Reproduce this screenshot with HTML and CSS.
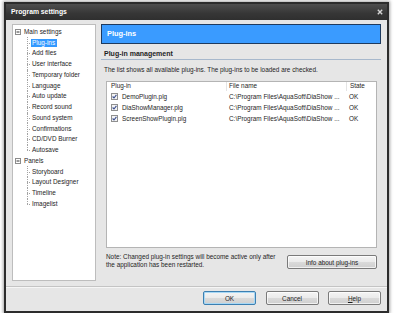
FILE: index.html
```html
<!DOCTYPE html>
<html>
<head>
<meta charset="utf-8">
<title>Program settings</title>
<link rel="stylesheet" href="styles.css">
</head>
<body>
<div class="window">
  <div class="titlebar">
    <span class="title">Program settings</span>
    <svg class="close" width="6" height="6" viewBox="0 0 6 6"><path d="M0.8 0.8 L5.2 5.2 M5.2 0.8 L0.8 5.2" stroke="#d4d4d4" stroke-width="1.4"/></svg>
  </div>
  <div class="content">
    <div class="tree">
      <div class="root">
        <svg class="toggle" width="6" height="6" viewBox="0 0 6 6"><rect x="0.5" y="0.5" width="5" height="5" fill="#fff" stroke="#8c8c8c"/><path d="M1.5 3 H4.5" stroke="#333" stroke-width="1"/></svg>
        <span class="root-label">Main settings</span>
      </div>
      <ul class="children">
        <li class="selected"><span class="label">Plug-ins</span></li>
        <li><span class="label">Add files</span></li>
        <li><span class="label">User interface</span></li>
        <li><span class="label">Temporary folder</span></li>
        <li><span class="label">Language</span></li>
        <li><span class="label">Auto update</span></li>
        <li><span class="label">Record sound</span></li>
        <li><span class="label">Sound system</span></li>
        <li><span class="label">Confirmations</span></li>
        <li><span class="label">CD/DVD Burner</span></li>
        <li><span class="label">Autosave</span></li>
      </ul>
      <div class="root">
        <svg class="toggle" width="6" height="6" viewBox="0 0 6 6"><rect x="0.5" y="0.5" width="5" height="5" fill="#fff" stroke="#8c8c8c"/><path d="M1.5 3 H4.5" stroke="#333" stroke-width="1"/></svg>
        <span class="root-label">Panels</span>
      </div>
      <ul class="children">
        <li><span class="label">Storyboard</span></li>
        <li><span class="label">Layout Designer</span></li>
        <li><span class="label">Timeline</span></li>
        <li><span class="label">Imagelist</span></li>
      </ul>
    </div>
    <div class="main">
      <div class="banner">Plug-ins</div>
      <div class="section-title">Plug-in management</div>
      <p class="desc">The list shows all available plug-ins. The plug-ins to be loaded are checked.</p>
      <div class="listview">
        <div class="lv-head">
          <span class="col c1">Plug-in</span>
          <span class="col c2">File name</span>
          <span class="col c3">State</span>
        </div>
        <div class="lv-row">
          <span class="col c1"><svg class="check" width="7" height="7" viewBox="0 0 7 7"><rect x="0.5" y="0.5" width="6" height="6" fill="#f4f4f4" stroke="#8f8f8f"/><path d="M1.6 3.5 L3 5 L5.4 1.8" fill="none" stroke="#3b4f8f" stroke-width="1.1"/></svg>DemoPlugin.plg</span>
          <span class="col c2">C:\Program Files\AquaSoft\DiaShow ...</span>
          <span class="col c3">OK</span>
        </div>
        <div class="lv-row">
          <span class="col c1"><svg class="check" width="7" height="7" viewBox="0 0 7 7"><rect x="0.5" y="0.5" width="6" height="6" fill="#f4f4f4" stroke="#8f8f8f"/><path d="M1.6 3.5 L3 5 L5.4 1.8" fill="none" stroke="#3b4f8f" stroke-width="1.1"/></svg>DiaShowManager.plg</span>
          <span class="col c2">C:\Program Files\AquaSoft\DiaShow ...</span>
          <span class="col c3">OK</span>
        </div>
        <div class="lv-row">
          <span class="col c1"><svg class="check" width="7" height="7" viewBox="0 0 7 7"><rect x="0.5" y="0.5" width="6" height="6" fill="#f4f4f4" stroke="#8f8f8f"/><path d="M1.6 3.5 L3 5 L5.4 1.8" fill="none" stroke="#3b4f8f" stroke-width="1.1"/></svg>ScreenShowPlugin.plg</span>
          <span class="col c2">C:\Program Files\AquaSoft\DiaShow ...</span>
          <span class="col c3">OK</span>
        </div>
      </div>
      <div class="note-row">
        <p class="note">Note: Changed plug-in settings will become active only after<br>the application has been restarted.</p>
        <button class="btn info">Info about plug-ins</button>
      </div>
    </div>
  </div>
  <div class="sep"></div>
  <div class="footer">
    <button class="btn default">OK</button>
    <button class="btn">Cancel</button>
    <button class="btn"><u>H</u>elp</button>
  </div>
</div>
</body>
</html>
```

FILE: styles.css
```css
html, body {
  margin: 0;
  padding: 0;
  background: #ffffff;
}

body {
  padding: 2px 0 0 4px;
  font-family: "Liberation Sans", Arial, sans-serif;
  font-size: 6.4px;
  color: #1e1e1e;
}

.window {
  width: 381px;
  height: 307px;
  border: 2px solid #2c2c2c;
  background: #e6e6e6;
  box-shadow: 0 0 3px 1px rgba(0, 0, 0, 0.35);
  display: flex;
  flex-direction: column;
}

.titlebar {
  height: 16px;
  flex: none;
  background: linear-gradient(#4e4e4e, #363636 60%, #2f2f2f);
  display: flex;
  align-items: center;
  justify-content: space-between;
  padding: 0 4px 0 5px;
}

.title {
  color: #ffffff;
  font-weight: bold;
  font-size: 6.8px;
  line-height: 16px;
}

.close {
  display: block;
}

.content {
  display: flex;
  gap: 5px;
  padding: 4px 6px 0 6px;
  height: 257px;
  flex: none;
}

/* tree */
.tree {
  width: 82px;
  height: 253px;
  background: #ffffff;
  border: 1px solid #bdbdbd;
  padding-top: 1.5px;
  flex: none;
}

.root {
  height: 10.75px;
  display: flex;
  align-items: center;
  padding-left: 2px;
}

.toggle {
  display: block;
  flex: none;
}

.root-label {
  margin-left: 3px;
  line-height: 10.75px;
}

.children {
  list-style: none;
  margin: 0;
  padding: 0;
}

.children li {
  position: relative;
  height: 10.75px;
  display: flex;
  align-items: center;
  padding-left: 17.5px;
}

.children li::before {
  content: "";
  position: absolute;
  left: 13.5px;
  top: 0;
  bottom: 0;
  border-left: 1px dotted #a3a3a3;
}

.children li:last-child::before {
  bottom: 50%;
}

.children li::after {
  content: "";
  position: absolute;
  left: 14px;
  top: 50%;
  width: 3px;
  border-top: 1px dotted #a3a3a3;
}

.label {
  padding: 0 1.5px;
  height: 8px;
  line-height: 8px;
}

.selected .label {
  background: #3399ff;
  color: #ffffff;
}

/* main */
.main {
  width: 280px;
  flex: none;
  display: flex;
  flex-direction: column;
}

.banner {
  height: 18px;
  background: #3a9bff;
  border: 1px solid #1e3a5e;
  color: #ffffff;
  font-weight: bold;
  font-size: 7.4px;
  line-height: 18px;
  padding-left: 5px;
}

.section-title {
  margin-top: 5px;
  padding-left: 3px;
  font-weight: bold;
  font-size: 7px;
  line-height: 10px;
  border-bottom: 1px solid #a7b8cc;
}

.desc {
  margin: 5px 0 0 0;
  padding-left: 3px;
  line-height: 10px;
}

.listview {
  margin: 6px 4px 0 5px;
  height: 165px;
  background: #ffffff;
  border: 1px solid #b4b4b4;
}

.lv-head {
  display: flex;
  height: 8.5px;
  line-height: 8.5px;
}

.lv-head .col + .col {
  border-left: 1px solid #e4e4e4;
}

.lv-row {
  display: flex;
  height: 11.3px;
  line-height: 11.3px;
}

.col {
  white-space: nowrap;
  overflow: hidden;
  display: flex;
  align-items: center;
}

.c1 {
  width: 115px;
  padding-left: 4px;
}

.c2 {
  width: 117px;
  padding-left: 3px;
}

.lv-head .c2 {
  padding-left: 2px;
}

.c3 {
  flex: 1;
  padding-left: 3px;
}

.lv-head .c3 {
  padding-left: 3px;
}

.check {
  display: block;
  flex: none;
  margin-right: 4px;
}

.note-row {
  display: flex;
  align-items: flex-start;
  justify-content: space-between;
  margin: 5px 4px 0 5px;
}

.note {
  margin: 0;
  line-height: 8px;
}

.btn {
  font-family: "Liberation Sans", Arial, sans-serif;
  font-size: 6.4px;
  color: #1e1e1e;
  height: 14px;
  width: 53px;
  padding: 0;
  border: 1px solid #7a7a7a;
  border-radius: 2px;
  background: linear-gradient(#f4f4f4, #ebebeb 48%, #dadada 52%, #cfcfcf);
  box-shadow: inset 0 0 0 1px rgba(255, 255, 255, 0.7);
}

.btn.info {
  width: 90px;
  margin-top: 2px;
}

.btn.default {
  border-color: #3c7fb1;
  box-shadow: inset 0 0 0 1px #a8d8f5;
}

.sep {
  margin-top: 5px;
  height: 1px;
  background: #c4c4c4;
  border-bottom: 1px solid #f6f6f6;
  flex: none;
}

.footer {
  display: flex;
  justify-content: flex-end;
  gap: 9.5px;
  padding: 3px 6px 0 0;
}
```
